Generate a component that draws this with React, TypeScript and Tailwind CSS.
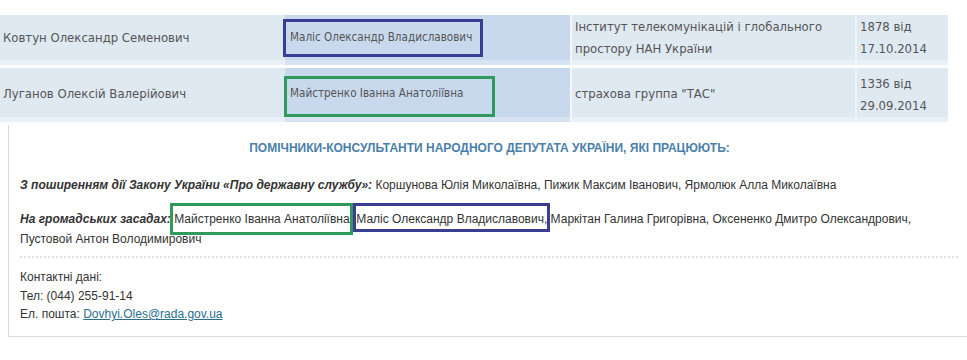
import React from "react";

const tableFont = { fontFamily: '"DejaVu Sans Condensed", "DejaVu Sans", sans-serif' };

export default function App() {
  return (
    <div className="w-[967px] h-[360px] bg-white overflow-hidden relative">
      {/* Table */}
      <div className="pt-[15px] w-[948px] text-[13px] text-[#555] flex flex-col gap-[3px]" style={tableFont}>
        {/* Row 1 */}
        <div className="flex h-[50px]">
          <div className="w-[285px] bg-[#dfe9f2] border-b-[5px] border-[#e9f0f6] flex items-center pl-[3px]">
            Ковтун Олександр Семенович
          </div>
          <div className="w-[285px] bg-[#c8d9ed] border-b-[5px] border-[#d7e3f0] flex items-center pl-[5px] relative text-[11.6px]">
            <span>Маліс Олександр Владиславович</span>
            <span className="absolute left-[-2px] top-[4px] w-[200px] h-[38px] border-[3px] border-[#3a3d94]" />
          </div>
          <div className="w-[2px] bg-[#f3f7fa]" />
          <div className="w-[283px] bg-[#dfe9f2] border-b-[5px] border-[#e9f0f6] pl-[3px] leading-[22px] pt-[1px]">
            Інститут телекомунікацій і глобального простору НАН України
          </div>
          <div className="w-[2px] bg-[#eef3f8]" />
          <div className="w-[91px] bg-[#dfe9f2] border-b-[5px] border-[#e9f0f6] pl-[3px] leading-[22px] pt-[1px]">
            1878 від 17.10.2014
          </div>
        </div>
        {/* Row 2 */}
        <div className="flex h-[54px]">
          <div className="w-[285px] bg-[#dfe9f2] border-b-[5px] border-[#e9f0f6] flex items-center pl-[3px] pt-[3px]">
            Луганов Олексій Валерійович
          </div>
          <div className="w-[285px] bg-[#c8d9ed] border-b-[5px] border-[#d7e3f0] flex items-center pl-[5px] pt-[3px] relative text-[11.6px]">
            <span>Майстренко Іванна Анатоліївна</span>
            <span className="absolute left-[-1px] top-[8px] w-[211px] h-[41px] border-[3px] border-[#2f9a5b]" />
          </div>
          <div className="w-[2px] bg-[#f3f7fa]" />
          <div className="w-[283px] bg-[#dfe9f2] border-b-[5px] border-[#e9f0f6] flex items-center pl-[3px] pt-[3px]">
            страхова группа "ТАС"
          </div>
          <div className="w-[2px] bg-[#eef3f8]" />
          <div className="w-[91px] bg-[#dfe9f2] border-b-[5px] border-[#e9f0f6] pl-[3px] leading-[22px] pt-[5px]">
            1336 від 29.09.2014
          </div>
        </div>
      </div>

      {/* Panel */}
      <div
        className="ml-[8px] mt-[3px] w-[962px] border-l border-b border-[#d9d9d9] pl-[11px] pr-[10px] text-[12px] text-[#333]"
        style={{ fontFamily: '"Liberation Sans", Arial, sans-serif' }}
      >
        <div className="pt-[15px] text-center font-bold text-[#4a80a8] leading-[16px] -ml-[11px] -mr-[10px]">
          ПОМІЧНИКИ-КОНСУЛЬТАНТИ НАРОДНОГО ДЕПУТАТА УКРАЇНИ, ЯКІ ПРАЦЮЮТЬ:
        </div>
        <p className="mt-[19px] leading-[20px]">
          <b><i>З поширенням дії Закону України «Про державну службу»:</i></b> Коршунова Юлія Миколаївна, Пижик Максим Іванович, Ярмолюк Алла Миколаївна
        </p>
        <p className="mt-[14px] leading-[20px] pr-[30px]">
          <b><i>На громадських засадах:</i></b>{" "}
          <span className="relative">
            Майстренко Іванна Анатоліївна
            <span className="absolute left-[-4px] right-[-3px] top-[-9px] bottom-[-9px] border-[3px] border-[#2f9a5b]" />
          </span>
          ,{" "}
          <span className="relative">
            Маліс Олександр Владиславович
            <span className="absolute left-[-3px] right-[-6px] top-[-9px] bottom-[-6px] border-[3px] border-[#3a3d94]" />
          </span>
          , Маркітан Галина Григорівна, Оксененко Дмитро Олександрович, Пустовой Антон Володимирович
        </p>
        <div className="mt-[7px] border-b-2 border-dotted border-[#e0e0e0] mr-[2px]" />
        <div className="pt-[10px] pb-[12px] leading-[18.5px]">
          <div>Контактні дані:</div>
          <div>Тел: (044) 255-91-14</div>
          <div>
            Ел. пошта: <a className="text-[#2a6e8e] underline" href="#">Dovhyi.Oles@rada.gov.ua</a>
          </div>
        </div>
      </div>
    </div>
  );
}
